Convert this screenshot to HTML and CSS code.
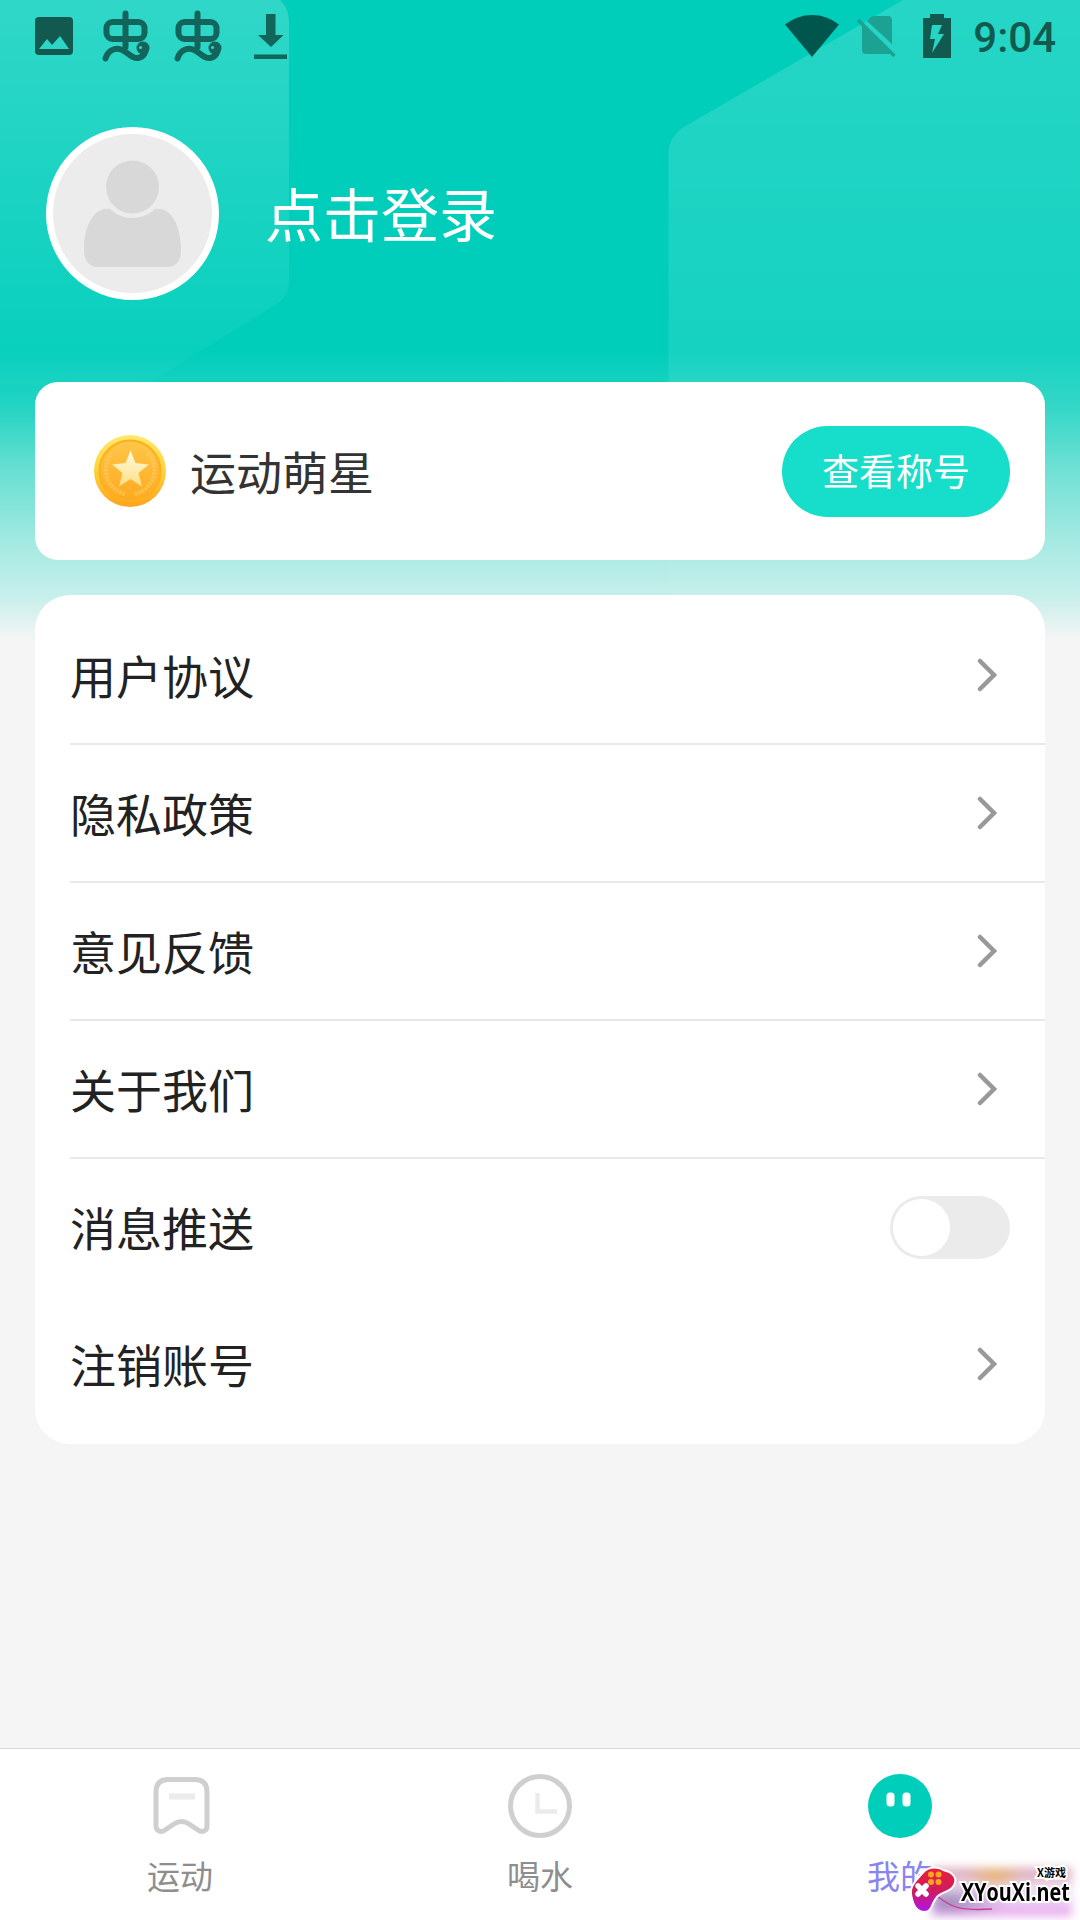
FILE: index.html
```html
<!DOCTYPE html>
<html lang="zh-CN">
<head>
    <meta charset="UTF-8">
    <meta name="viewport" content="width=device-width, initial-scale=1.0">
    <title>我的</title>
    <link rel="stylesheet" href="styles.css">
</head>
<body>

    <svg class="page-bg" viewBox="0 0 1080 640">
        <defs>
            <linearGradient id="shapeFade" x1="0" y1="0" x2="0" y2="430" gradientUnits="userSpaceOnUse">
                <stop offset="0" stop-color="#fff" stop-opacity="0.19"/>
                <stop offset="1" stop-color="#fff" stop-opacity="0"/>
            </linearGradient>
            <linearGradient id="shapeFadeRight" x1="0" y1="0" x2="0" y2="640" gradientUnits="userSpaceOnUse">
                <stop offset="0" stop-color="#fff" stop-opacity="0.15"/>
                <stop offset="0.6" stop-color="#fff" stop-opacity="0.08"/>
                <stop offset="1" stop-color="#fff" stop-opacity="0"/>
            </linearGradient>
        </defs>
        <path fill="url(#shapeFade)" d="M0 0H280Q289 8 289 22V281Q289 297 275 305L145 385H0Z"/>
        <path fill="url(#shapeFadeRight)" d="M1080 0H903L684 127Q668.500 137 668.500 154V640H1080Z"/>
    </svg>

    <div class="status-bar">
        <div class="status-left">
            <svg width="38" height="38" viewBox="0 0 38 38">
                <path fill="#12594f" fill-rule="evenodd" d="M4 0H34Q38 0 38 4V34Q38 38 34 38H4Q0 38 0 34V4Q0 0 4 0ZM4 32H34L25 19L17 28L12 22Z"/>
            </svg>
            <svg class="bug" width="48" height="52" viewBox="0 0 48 52">
                <g fill="none" stroke="#12655a" stroke-width="6" stroke-linecap="round" stroke-linejoin="round">
                    <rect x="4.500" y="12" width="38" height="17" rx="6"/>
                    <path d="M23.500 3.500V37M3.500 48.500C6 40 13 37.500 19 39.500C26 42 30 49 36 48C42 47 44 42 44 38"/>
                </g>
                <circle cx="41" cy="38" r="6.500" fill="#12655a"/>
                <circle cx="38.500" cy="37.500" r="1.600" fill="#54c5b8"/>
            </svg>
            <svg class="bug" width="48" height="52" viewBox="0 0 48 52">
                <g fill="none" stroke="#12655a" stroke-width="6" stroke-linecap="round" stroke-linejoin="round">
                    <rect x="4.500" y="12" width="38" height="17" rx="6"/>
                    <path d="M23.500 3.500V37M3.500 48.500C6 40 13 37.500 19 39.500C26 42 30 49 36 48C42 47 44 42 44 38"/>
                </g>
                <circle cx="41" cy="38" r="6.500" fill="#12655a"/>
                <circle cx="38.500" cy="37.500" r="1.600" fill="#54c5b8"/>
            </svg>
            <svg class="download" width="34" height="46" viewBox="0 0 34 46">
                <path fill="#12655a" d="M12 0H21.500V21H29.500L17 33L4 21H12ZM0 40.500H33V45H0Z"/>
            </svg>
        </div>
        <div class="status-right">
            <svg width="54" height="42" viewBox="0 0 54 42">
                <path fill="#00564c" d="M27 42L0 9.500Q12 0 27 0Q42 0 54 9.500Z"/>
            </svg>
            <svg class="no-sim" width="39" height="42" viewBox="0 0 39 42">
                <path fill="#1ca292" d="M13 2Q15 0 17 0H31Q35 0 35 4V28L10 5ZM5 9L34 38H9Q5 38 5 34Z"/>
                <path stroke="#1ca292" stroke-width="3.500" d="M1 4L37.500 40"/>
            </svg>
            <svg class="battery" width="28" height="44" viewBox="0 0 28 44">
                <path fill="#12594f" fill-rule="evenodd" d="M7 0H21V4H28V44H0V4H7ZM9 11L7 25H12L9 39L21 20H15L19 11Z"/>
            </svg>
            <span class="time">9:04</span>
        </div>
    </div>

    <div class="profile">
        <div class="avatar">
            <svg width="98" height="107" viewBox="0 0 98 107">
                <circle cx="48.500" cy="27" r="26.500" fill="#d8d8d8"/>
                <path fill="#d8d8d8" d="M26 49C38 61 59 61 71 49C88 47 97 67 97 90Q97 107 82 107H15Q0 107 0 90C0 67 9 47 26 49Z"/>
            </svg>
        </div>
        <span class="login">点击登录</span>
    </div>

    <div class="card title-card">
        <svg class="coin" width="72" height="72" viewBox="0 0 72 72">
            <defs>
                <linearGradient id="coinEdge" x1="0" y1="0" x2="0" y2="1">
                    <stop offset="0" stop-color="#ffe96b"/>
                    <stop offset="0.5" stop-color="#ffd23c"/>
                    <stop offset="1" stop-color="#ffa31d"/>
                </linearGradient>
                <linearGradient id="coinFace" x1="0" y1="0" x2="0" y2="1">
                    <stop offset="0" stop-color="#ffc64a"/>
                    <stop offset="1" stop-color="#ffa91f"/>
                </linearGradient>
                <linearGradient id="coinStar" x1="0" y1="0" x2="0" y2="1">
                    <stop offset="0" stop-color="#fffbe0"/>
                    <stop offset="1" stop-color="#ffdf83"/>
                </linearGradient>
            </defs>
            <circle cx="36" cy="36" r="36" fill="url(#coinEdge)"/>
            <circle cx="36" cy="36" r="30.500" fill="url(#coinFace)" stroke="#fdb01c" stroke-width="2"/>
            <path fill="none" stroke="#ffd165" stroke-opacity="0.6" stroke-width="4" stroke-dasharray="2.500 1" d="M18 18A25 25 0 0 0 31 59M54 18A25 25 0 0 1 41 59"/>
            <path fill="url(#coinStar)" d="M36.500 15.500L41.500 28L55 29.500L44.500 38L48 51.500L36.500 44L25 51.500L28.500 38L18 29.500L31.500 28Z"/>
        </svg>
        <span class="title-name">运动萌星</span>
        <button class="title-btn">查看称号</button>
    </div>

    <div class="card menu">
        <div class="menu-item">
            <span>用户协议</span>
            <svg class="arrow" viewBox="0 0 20 34"><path d="M3 3L17 17L3 31"/></svg>
        </div>
        <div class="menu-item">
            <span>隐私政策</span>
            <svg class="arrow" viewBox="0 0 20 34"><path d="M3 3L17 17L3 31"/></svg>
        </div>
        <div class="menu-item">
            <span>意见反馈</span>
            <svg class="arrow" viewBox="0 0 20 34"><path d="M3 3L17 17L3 31"/></svg>
        </div>
        <div class="menu-item">
            <span>关于我们</span>
            <svg class="arrow" viewBox="0 0 20 34"><path d="M3 3L17 17L3 31"/></svg>
        </div>
        <div class="menu-item no-line">
            <span>消息推送</span>
            <div class="switch"></div>
        </div>
        <div class="menu-item no-line">
            <span>注销账号</span>
            <svg class="arrow" viewBox="0 0 20 34"><path d="M3 3L17 17L3 31"/></svg>
        </div>
    </div>

    <div class="tab-bar">
        <div class="tab">
            <svg width="66" height="66" viewBox="0 0 66 66">
                <path fill="none" stroke="#cfcfcf" stroke-width="5" stroke-linejoin="round" d="M21 6.500H48Q60 6.500 60 19V53C60 58 55 60 51 57L42 51Q34.500 46 27 51L18 57C14 60 9 58 9 53V19Q9 6.500 21 6.500Z"/>
                <path stroke="#ebebeb" stroke-width="6" d="M22 23.500H48"/>
            </svg>
            <span>运动</span>
        </div>
        <div class="tab">
            <svg width="66" height="66" viewBox="0 0 66 66">
                <circle cx="33" cy="33" r="29.500" fill="none" stroke="#cfcfcf" stroke-width="5"/>
                <path fill="none" stroke="#ebebeb" stroke-width="4.500" d="M30.500 20V38.500H50"/>
            </svg>
            <span>喝水</span>
        </div>
        <div class="tab active">
            <svg width="66" height="66" viewBox="0 0 66 66">
                <circle cx="33" cy="33" r="32" fill="#00cebb"/>
                <rect x="19.500" y="19.500" width="8" height="14" rx="3.500" fill="#fff"/>
                <rect x="35.500" y="19.500" width="8" height="14" rx="3.500" fill="#fff"/>
            </svg>
            <span>我的</span>
        </div>
    </div>

    <div class="site-mark">
        <div class="glow"></div>
        <svg class="gamepad" width="84" height="56" viewBox="0 0 84 56">
            <defs>
                <linearGradient id="padFill" x1="0" y1="0" x2="0" y2="1">
                    <stop offset="0" stop-color="#e8203a"/>
                    <stop offset="0.5" stop-color="#cf1c5a"/>
                    <stop offset="1" stop-color="#b414e6"/>
                </linearGradient>
            </defs>
            <path fill="none" stroke="#cc3f94" stroke-width="1.500" d="M28 30C42 41 50 45 83 43"/>
            <path fill="url(#padFill)" stroke="#fff" stroke-width="4" paint-order="stroke" stroke-linejoin="round" d="M14 8C19 2 27 1 34 5C43 7 48 12 44 19C40 26 30 25 26 32C21 39 22 45 15 45C7 45 4 35 3 28C2 20 8 15 14 8Z"/>
            <path stroke="#fff" stroke-width="5.500" stroke-linecap="round" d="M9 20L17 28M17 20L9 28"/>
            <g fill="#ffa51d">
                <circle cx="22" cy="8.500" r="3"/>
                <circle cx="29.500" cy="8.500" r="3"/>
                <circle cx="22" cy="16" r="3"/>
                <circle cx="29.500" cy="16" r="3"/>
            </g>
        </svg>
        <span class="mark-small">X游戏</span>
        <span class="mark-name">XYouXi.net</span>
    </div>

</body>
</html>
```

FILE: styles.css
```css
* {
    box-sizing: border-box;
}

body {
    margin: 0;
    width: 1080px;
    height: 1920px;
    display: flex;
    flex-direction: column;
    position: relative;
    overflow: hidden;
    font-family: "Noto Sans CJK SC", sans-serif;
    color: #222;
    background: #f5f5f5 linear-gradient(#00cebb 0, #00cebb 352px, #25d4c3 408px, #68dfd2 470px, #a9eae3 550px, #c6efeb 595px, #f5f5f5 640px) no-repeat 0 0 / 100% 640px;
}

svg {
    display: block;
    flex-shrink: 0;
}

.page-bg {
    position: absolute;
    top: 0;
    left: 0;
    width: 1080px;
    height: 640px;
    z-index: -1;
}

/* status bar */
.status-bar {
    height: 72px;
    padding: 0 24px 0 35px;
    display: flex;
    justify-content: space-between;
}

.status-left,
.status-right {
    display: flex;
    align-items: center;
}

.bug {
    margin-left: 29px;
}

.bug + .bug {
    margin-left: 24px;
}

.download {
    margin: 2px 0 0 32px;
}

.status-right {
    padding-bottom: 1px;
}

.no-sim {
    margin: 2px 0 0 18px;
}

.battery {
    margin-left: 27px;
}

.time {
    margin: 4px 0 0 22px;
    font-family: Roboto, sans-serif;
    font-size: 42px;
    font-weight: 500;
    line-height: 48px;
    color: #12594f;
}

/* profile */
.profile {
    height: 310px;
    padding: 55px 46px 0;
    display: flex;
    align-items: flex-start;
}

.avatar {
    width: 173px;
    height: 173px;
    border: 7px solid #fff;
    border-radius: 50%;
    background: #ececec;
    display: flex;
    justify-content: center;
    padding-top: 26px;
}

.login {
    margin-left: 46px;
    font-size: 58px;
    line-height: 171px;
    color: #fff;
}

/* cards */
.card {
    margin: 0 35px;
    background: #fff;
}

.title-card {
    height: 178px;
    padding: 0 35px 0 59px;
    border-radius: 23px;
    display: flex;
    align-items: center;
}

.title-name {
    margin-left: 24px;
    padding-bottom: 2px;
    font-size: 46px;
    color: #333;
}

.title-btn {
    width: 228px;
    height: 91px;
    margin-left: auto;
    padding: 0 0 2px;
    border: none;
    border-radius: 46px;
    background: #17deca;
    font-family: inherit;
    font-size: 37px;
    color: #fff;
}

.menu {
    height: 849px;
    margin-top: 35px;
    padding: 12px 0 0 35px;
    border-radius: 35px;
}

.menu-item {
    height: 138px;
    padding-right: 35px;
    border-bottom: 2px solid #e8e8e8;
    display: flex;
    align-items: center;
    justify-content: space-between;
    font-size: 46px;
}

.menu-item span {
    padding-bottom: 2px;
}

.no-line {
    border-color: transparent;
}

.no-line + .no-line {
    height: 136px;
}

.arrow {
    width: 20px;
    height: 34px;
    margin-right: 13px;
    fill: none;
    stroke: #999;
    stroke-width: 4.5;
    stroke-linecap: round;
}

.switch {
    width: 120px;
    height: 63px;
    padding: 3px;
    border-radius: 32px;
    background: #ebebeb;
}

.switch::before {
    content: "";
    display: block;
    width: 57px;
    height: 57px;
    border-radius: 50%;
    background: #fff;
}

/* bottom tabs */
.tab-bar {
    height: 172px;
    margin-top: auto;
    border-top: 1px solid #d9d9d9;
    background: #fff;
    display: flex;
}

.tab {
    flex: 1;
    padding-top: 24px;
    display: flex;
    flex-direction: column;
    align-items: center;
    font-size: 33px;
    line-height: 48px;
    color: #8e8e8e;
}

.tab span {
    margin-top: 12px;
}

.active {
    color: #8884f0;
}

/* site mark over the tab bar */
.site-mark {
    position: absolute;
    right: 0;
    bottom: 0;
    width: 170px;
    height: 56px;
}

.gamepad,
.glow,
.mark-small,
.mark-name {
    position: absolute;
}

.gamepad {
    left: -1px;
    top: 2px;
}

.glow {
    left: 22px;
    top: 4px;
    width: 140px;
    height: 48px;
    filter: blur(5px);
    background:
        radial-gradient(ellipse at 45% 12%, #e9b26c, transparent 28%),
        radial-gradient(ellipse at 12% 70%, #9a84b8, transparent 35%),
        linear-gradient(#d6a0b4, #f3e6f5 45%, #eed3f5 70%, #e49bea);
}

.mark-small,
.mark-name {
    color: #000;
    font-weight: 700;
    white-space: nowrap;
    -webkit-text-stroke: 4px #fff;
    paint-order: stroke fill;
}

.mark-small {
    right: 14px;
    top: 0;
    font-size: 11px;
    line-height: 16px;
}

.mark-name {
    left: 51px;
    top: 10px;
    font-family: "Open Sans", sans-serif;
    font-size: 25px;
    line-height: 34px;
    transform: scaleX(0.79);
    transform-origin: left;
}
```
